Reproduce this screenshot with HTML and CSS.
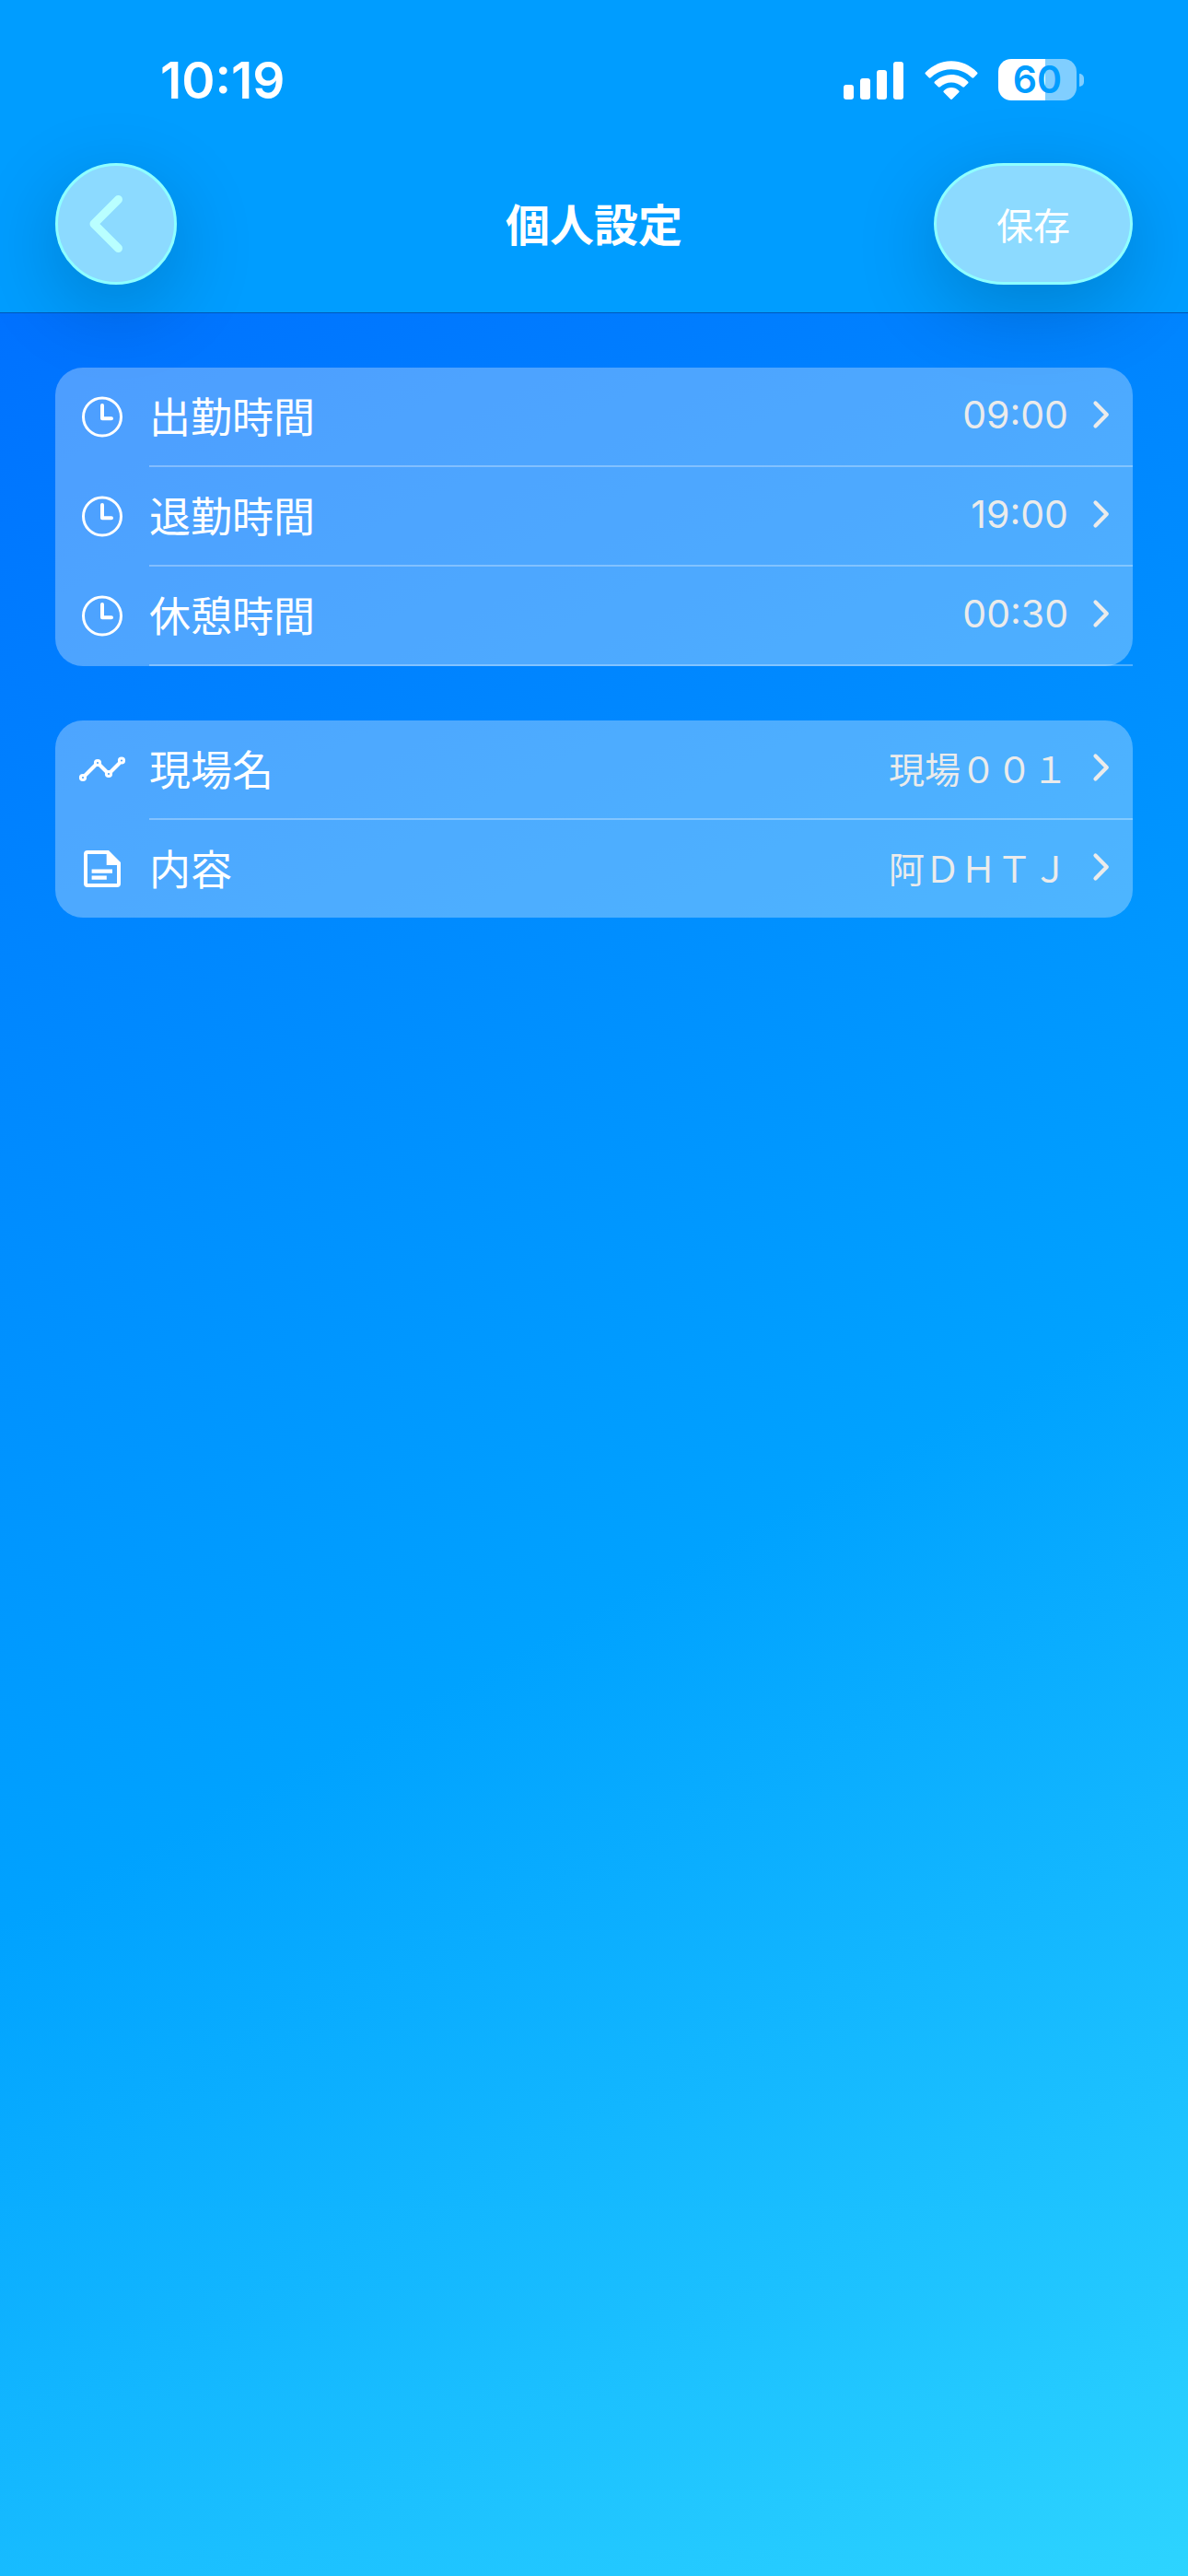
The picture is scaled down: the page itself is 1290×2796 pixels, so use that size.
FILE: index.html
```html
<!DOCTYPE html>
<html lang="ja">
<head>
  <meta charset="UTF-8" />
  <meta name="viewport" content="width=device-width, initial-scale=1" />
  <title>個人設定</title>
  <link rel="stylesheet" href="styles.css">
</head>
<body>

  <!-- Shared icons -->
  <svg class="sprite" aria-hidden="true">
    <symbol id="icon-clock" viewBox="0 0 54 54">
      <circle cx="27" cy="26.500" r="20.500" fill="none" stroke="#fff" stroke-width="3" />
      <path d="M27 14v14.200h10" fill="none" stroke="#fff" stroke-width="4" stroke-linecap="round" stroke-linejoin="round" />
    </symbol>
    <symbol id="icon-chevron" viewBox="0 0 20 32">
      <path d="M3.500 3.500L15.800 16 3.500 28.500" fill="none" stroke="#ebebeb" stroke-width="4.200" stroke-linecap="round" stroke-linejoin="round" />
    </symbol>
  </svg>

  <header class="header">
    <div class="status-bar">
      <span class="time">10:19</span>
      <div class="status-icons">
        <svg class="signal" viewBox="0 0 66 42" fill="#fff">
          <rect x="0" y="26" width="11" height="16" rx="3" />
          <rect x="18" y="19" width="11" height="23" rx="3" />
          <rect x="36" y="10" width="11" height="32" rx="3" />
          <rect x="54" y="1" width="11" height="41" rx="3" />
        </svg>
        <svg class="wifi" viewBox="0 0 58 42" fill="#fff">
          <path d="M1 12.500C16.500 -3.800 41.500 -3.800 57 12.500c.7.700.7 1.400 0 2.100l-3.600 3.600c-.7.700-1.400.6-2.100 0C39 6.200 19 6.200 6.700 18.200c-.7.600-1.400.7-2.100 0L1 14.600c-.7-.7-.7-1.400 0-2.100z" />
          <path d="M11 22.600c10-10 26-10 36 0 .7.700.7 1.400 0 2L43.200 28.300c-.7.600-1.400.6-2.100 0-7-6.300-17.200-6.300-24.200 0-.7.600-1.400.6-2.100 0L11 24.600c-.7-.6-.7-1.300 0-2z" />
          <path d="M20.800 32.400c4.600-4.600 11.800-4.600 16.400 0 .6.600.6 1.300 0 1.900l-7.200 7.200c-.7.700-1.300.7-2 0l-7.200-7.200c-.6-.6-.6-1.300 0-1.900z" />
        </svg>
        <div class="battery">
          <span class="battery-level">60</span>
          <span class="battery-cap"></span>
        </div>
      </div>
    </div>

    <nav class="nav-bar">
      <button class="glass-button back-button" type="button" aria-label="戻る">
        <svg class="back-icon" viewBox="0 0 36 62">
          <path d="M31.500 4.500L5 31l26.500 26.500" fill="none" stroke="#b9ffff" stroke-width="9" stroke-linecap="round" stroke-linejoin="round" />
        </svg>
      </button>
      <h1 class="title">個人設定</h1>
      <button class="glass-button save-button" type="button">保存</button>
    </nav>
  </header>

  <main class="settings">
    <ul class="card card-times">
      <li class="row">
        <button class="row-button" type="button">
          <svg class="row-icon"><use href="#icon-clock" /></svg>
          <span class="row-body">
            <span class="label">出勤時間</span>
            <span class="value">09:00</span>
            <svg class="chevron"><use href="#icon-chevron" /></svg>
          </span>
        </button>
      </li>
      <li class="row">
        <button class="row-button" type="button">
          <svg class="row-icon"><use href="#icon-clock" /></svg>
          <span class="row-body">
            <span class="label">退勤時間</span>
            <span class="value">19:00</span>
            <svg class="chevron"><use href="#icon-chevron" /></svg>
          </span>
        </button>
      </li>
      <li class="row">
        <button class="row-button" type="button">
          <svg class="row-icon"><use href="#icon-clock" /></svg>
          <span class="row-body">
            <span class="label">休憩時間</span>
            <span class="value">00:30</span>
            <svg class="chevron"><use href="#icon-chevron" /></svg>
          </span>
        </button>
      </li>
    </ul>

    <ul class="card">
      <li class="row">
        <button class="row-button" type="button">
          <svg class="row-icon" viewBox="0 0 54 54">
            <g fill="none" stroke="#fff" stroke-width="3">
              <path d="M8 33L20 21M24 21l8 8M36 29L46 19" stroke-width="4" />
              <circle cx="6" cy="35" r="2.600" />
              <circle cx="22" cy="19" r="2.600" />
              <circle cx="34" cy="31" r="2.600" />
              <circle cx="48" cy="16.500" r="2.600" />
            </g>
          </svg>
          <span class="row-body">
            <span class="label">現場名</span>
            <span class="value value-text">現場００１</span>
            <svg class="chevron"><use href="#icon-chevron" /></svg>
          </span>
        </button>
      </li>
      <li class="row">
        <button class="row-button" type="button">
          <svg class="row-icon" viewBox="0 0 54 54">
            <path d="M11 7h23l13 13v23a4 4 0 0 1-4 4H11a4 4 0 0 1-4-4V11a4 4 0 0 1 4-4zM11 11v32h32V23H31.700V11z" fill="#fff" fill-rule="evenodd" />
            <path d="M15.600 27.500h22.400v4.200H15.600zM15.600 34.500h16.200v4.200H15.600z" fill="#fff" />
          </svg>
          <span class="row-body">
            <span class="label">内容</span>
            <span class="value value-text">阿ＤＨＴＪ</span>
            <svg class="chevron"><use href="#icon-chevron" /></svg>
          </span>
        </button>
      </li>
    </ul>
  </main>

</body>
</html>
```

FILE: styles.css
```css
* {
  box-sizing: border-box;
}

body {
  margin: 0;
  min-height: 100vh;
  font-family: Inter, "Noto Sans CJK JP", sans-serif;
  color: #fff;
  background: linear-gradient(152deg, #0068ff 0%, #00a2ff 60%, #2dd4ff 100%);
}

button {
  padding: 0;
  border: 0;
  background: none;
  color: inherit;
  font-family: inherit;
  cursor: pointer;
}

.sprite {
  display: none;
}

/* Header */
.header {
  background-color: #009dff;
  border-bottom: 1px solid #0058b8;
}

.status-bar {
  display: flex;
  justify-content: space-between;
  align-items: center;
  padding: 56px 113px 0 174px;
  height: 117px;
}

.time {
  font-size: 55px;
  font-weight: 600;
}

.status-icons {
  display: flex;
  align-items: center;
  gap: 22px;
}

.signal {
  width: 66px;
  height: 42px;
}

.wifi {
  width: 58px;
  height: 42px;
}

.battery {
  display: flex;
  align-items: center;
  gap: 3px;
}

.battery-level {
  width: 85px;
  height: 45px;
  border-radius: 14px;
  background: linear-gradient(to right, #fff 60%, #80ceff 60%);
  color: #009dff;
  font-size: 41px;
  font-weight: 600;
  line-height: 45px;
  text-align: center;
}

.battery-cap {
  width: 5px;
  height: 14px;
  border-radius: 0 5px 5px 0;
  background-color: #80ceff;
}

.nav-bar {
  display: grid;
  grid-template-columns: 1fr auto 1fr;
  align-items: center;
  padding: 60px 60px 30px;
}

.title {
  margin: 0;
  padding-bottom: 4px;
  font-size: 48px;
  font-weight: 700;
}

.glass-button {
  display: flex;
  justify-content: center;
  align-items: center;
  height: 132px;
  border: 3px solid #8fffff;
  border-radius: 66px;
  background-color: #8cdaff;
  box-shadow: 0 24px 90px rgba(0, 0, 0, 0.2);
}

.back-button {
  width: 132px;
}

.back-icon {
  width: 36px;
  height: 62px;
  margin-right: 22px;
}

.save-button {
  justify-self: end;
  width: 216px;
  border-radius: 76px / 66px;
  font-size: 40px;
}

/* Settings list */
.settings {
  display: flex;
  flex-direction: column;
  gap: 59px;
  padding: 59px 60px;
}

.card {
  margin: 0;
  padding: 0;
  list-style: none;
  border-radius: 30px;
  background-color: rgba(255, 255, 255, 0.3);
}

.row-button {
  display: flex;
  align-items: center;
  gap: 24px;
  width: 100%;
  padding-left: 24px;
  text-align: left;
}

.row-icon {
  flex: none;
  width: 54px;
  height: 54px;
}

.row-body {
  flex: 1;
  display: flex;
  align-items: center;
  height: 106px;
  padding: 0 24px 4px 0;
}

.row:not(:last-child) .row-body,
.card-times .row-body {
  height: 108px;
  border-bottom: 2px solid rgba(255, 255, 255, 0.3);
}

.label {
  flex: 1;
  font-size: 45px;
}

.value {
  margin-right: 26px;
  color: #ebebeb;
  font-size: 41px;
}

.value-text {
  font-size: 39px;
}

.chevron {
  width: 20px;
  height: 32px;
}
```
